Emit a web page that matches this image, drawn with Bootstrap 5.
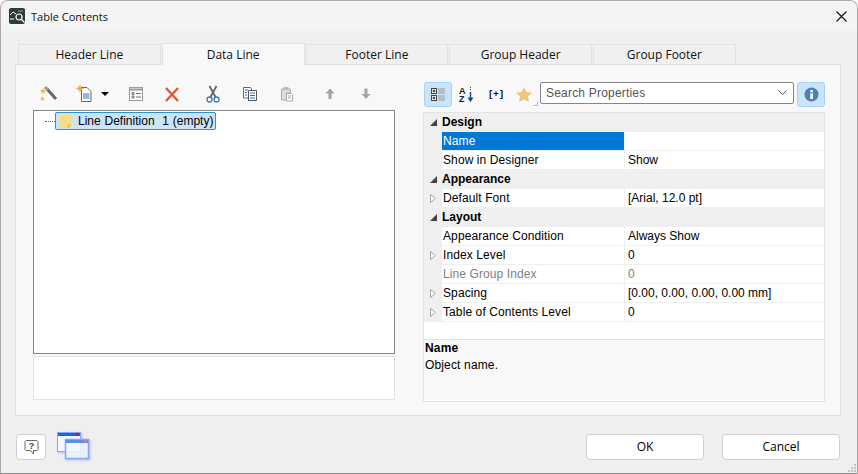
<!DOCTYPE html>
<html lang="en">
<head>
    <meta charset="UTF-8">
    <meta name="viewport" content="width=device-width, initial-scale=1.0">
    <title>Table Contents</title>
    <link href="https://cdn.jsdelivr.net/npm/bootstrap@5.3.0/dist/css/bootstrap.min.css" rel="stylesheet">
    <style>
        html, body { height: 100%; overflow: hidden; background: #fff; }
        body { font-family: "Liberation Sans", Arial, sans-serif; font-size: 12px; color: #000; line-height: 1; }
        .dlg { width: 858px; height: 474px; border: 1px solid #a9a9a9; border-bottom-color: #8c8c8c; border-radius: 8px 8px 0 0; background: #efefef; overflow: hidden; position: relative; }
        .dlg-title { height: 30px; background: #f3f3f3; padding: 0 10px 0 8px; }
        .dlg-title span { font-family: "Open Sans", sans-serif; font-size: 11px; margin-left: 6px; color: #111; }
        .dlg-body { padding: 11px 16px 0 14px; }
        .tabrow { height: 22px; padding-left: 3px; gap: 1px; align-items: flex-end; border: 0; flex-wrap: nowrap; }
        .tabrow .tabitem { width: 142.75px; height: 20px; background: #f0f0f0; border: 1px solid #e3e3e3; border-bottom: 0; text-align: center; font-family: "Open Sans", sans-serif; font-size: 12px; line-height: 19px; color: #111; }
        .tabrow .tabitem.on { height: 22px; background: #f8f8f8; line-height: 21px; position: relative; z-index: 1; margin-bottom: -1px; }
        .panel-box { height: 352px; background: #f8f8f8; border: 1px solid #e3e3e3; padding: 17px 14px 14px 17px; gap: 29px; }
        .left-side { width: 362px; flex: none; }
        .right-side { width: 402px; flex: none; }
        .tbar { height: 24px; margin-bottom: 4px; position: relative; }
        .ticon { width: 24px; height: 24px; flex: none; }
        .tree-box { height: 244px; background: #fff; border: 1px solid #858585; padding: 1px 0 0 11px; }
        .tree-dots { width: 10px; border-top: 1px dotted #666; }
        .tree-sel { height: 18px; background: #cce4f7; border: 1px solid #2f8fd6; border-radius: 2px; padding: 0 2px 1px 3px; color: #000; }
        .tree-sel span { margin-left: 7px; word-spacing: .5px; }
        .note-box { height: 44px; margin-top: 2px; background: #fff; border: 1px solid #e3e3e3; }
        .rbtn { width: 28px; height: 25px; flex: none; border-radius: 3px; }
        .rbtn.on { background: #cce4f7; border: 1px solid #a6d2f5; }
        .combo { width: 254px; height: 22px; background: #fff; border: 1px solid #858585; border-radius: 2px; padding: 0 6px 1px 5px; color: #555; letter-spacing: .2px; }
        .prop-grid { height: 290px; border: 1px solid #e3e3e3; margin-top: 5px; background: #fff; margin-left: -1px; width: 402px; }
        .prop-sec { height: 19px; background: #efefef; font-weight: 700; padding-bottom: 1px; }
        .prop-row { height: 19px; background: #efefef; }
        .gut { width: 18px; flex: none; height: 100%; }
        .pname { width: 182px; flex: none; height: 18px; background: #fff; padding: 0 0 1px 1px; letter-spacing: .1px; margin-right: 1px; }
        .pval { flex-grow: 1; height: 18px; background: #fff; padding: 0 0 1px 3px; }
        .pname.sel { background: #0078d7; color: #fff; }
        .muted-row { color: #808080; }
        .prop-blank { height: 18px; background: #fff; border-bottom: 1px solid #e3e3e3; }
        .prop-desc { height: 60px; background: #f8f8f8; padding: 0 1px; line-height: 17px; letter-spacing: .15px; }
        .dlg-foot { height: 58px; padding: 18px 17px 0 15px; }
        .helpbtn { width: 30px; height: 26px; background: #fff; border: 1px solid #cfcfcf; border-radius: 4px; padding: 0; }
        .winicon { margin: -2px 0 0 11px; filter: drop-shadow(1px 1px 1px rgba(90, 120, 220, .45)); }
        .actbtn { width: 118px; height: 26px; background: #fff; border: 1px solid #cfcfcf; border-radius: 4px; font-family: "Open Sans", sans-serif; font-size: 12px; color: #000; padding: 0; }
        .actbtn:hover { background: #f5f5f5; border-color: #bbb; color: #000; }
        .gripper { position: absolute; right: 0; bottom: 0; }
    </style>
</head>
<body>
    <div class="dlg d-flex flex-column">
        <!-- title bar -->
        <div class="dlg-title d-flex align-items-center flex-shrink-0">
            <svg width="16" height="16" viewBox="0 0 16 16"><rect width="16" height="16" rx="2" fill="#2f3a3d"/><path d="M1 7 4 4l3 2" fill="none" stroke="#fff"/><path d="M1 11h4" stroke="#fff"/><circle cx="10" cy="9" r="3" fill="none" stroke="#fff" stroke-width="1.2"/><path d="m12.500 11.500 3 3" stroke="#fff" stroke-width="1.3"/><path d="M9 3h5" stroke="#9aa"/></svg>
            <span>Table Contents</span>
            <svg class="ms-auto" width="11" height="11" viewBox="0 0 11 11"><path d="m.5.5 10 10m0-10-10 10" stroke="#111" stroke-width="1.1" fill="none"/></svg>
        </div>

        <div class="dlg-body flex-shrink-0">
            <!-- tabs -->
            <div class="nav tabrow d-flex">
                <div class="tabitem">Header Line</div>
                <div class="tabitem on">Data Line</div>
                <div class="tabitem">Footer Line</div>
                <div class="tabitem">Group Header</div>
                <div class="tabitem">Group Footer</div>
            </div>

            <div class="panel-box d-flex">
                <!-- left: line tree -->
                <div class="left-side">
                    <div class="tbar d-flex align-items-center">
                        <svg class="ticon" style="margin-left:3px" viewBox="0 0 24 24"><path d="m11 7 9 10" stroke="#666" stroke-width="3"/><path d="m9 5 3 3" stroke="#999" stroke-width="3"/><path d="m7 6 1 2 2 .3-1.500 1.400.4 2L7 10.800l-1.900.9.400-2L4 8.300 6 8z" fill="#eebb55"/><path d="m6.500 14 .8 1.700 1.800.2-1.300 1.200.3 1.900-1.600-.9-1.600.9.300-1.900-1.300-1.200 1.800-.2z" fill="#f0c060"/></svg>
                        <svg class="ticon" style="margin-left:12px" viewBox="0 0 24 24"><path d="M9.500 5.500H15l4 4v10h-9.500z" fill="#fff" stroke="#666"/><path d="M11 12h6.500M11 14h6.500M11 16h6.500" stroke="#2a6fb5"/><circle cx="8" cy="6.500" r="2" fill="#f2b84e"/><path d="M8 2.500v8M4 6.500h8M5.500 4l5 5M10.500 4l-5 5" stroke="#e6a23a" stroke-width=".7"/></svg>
                        <svg width="8" height="4" viewBox="0 0 8 4" style="margin-left:5px"><path d="M0 0h8L4 4z" fill="#000"/></svg>
                        <svg class="ticon" style="margin-left:15px" viewBox="0 0 24 24"><rect x="5.500" y="5.500" width="13" height="13" fill="#fafafa" stroke="#999"/><path d="M5 7.500h14" stroke="#999" stroke-width="2"/><path d="M8 10.500h2v2H8zm0 3.500h2v2H8z" fill="none" stroke="#777"/><path d="M12 11.500h5M12 15h5" stroke="#777"/></svg>
                        <svg class="ticon" style="margin-left:12px" viewBox="0 0 24 24"><path d="m6 6 12 13M18 6 6 19" stroke="#d9593a" stroke-width="2.400"/></svg>
                        <svg class="ticon" style="margin-left:17px" viewBox="0 0 24 24"><path d="m8.500 4 6 11M15.500 4l-6 11" stroke="#666" stroke-width="1.800"/><circle cx="8.500" cy="17.500" r="2.500" fill="none" stroke="#3f79b8" stroke-width="1.300"/><circle cx="15.500" cy="17.500" r="2.500" fill="none" stroke="#3f79b8" stroke-width="1.300"/></svg>
                        <svg class="ticon" style="margin-left:13px" viewBox="0 0 24 24"><path d="M5.500 5.500h7l1 1.500v9h-8z" fill="#fff" stroke="#666"/><path d="M10.500 8.500h8v10h-8z" fill="#fff" stroke="#555"/><path d="M7 8h3M7 10.500h2M7 13h2" stroke="#2a6fb5"/><path d="M12 11h5M12 13.500h5M12 16h5" stroke="#2a6fb5"/></svg>
                        <svg class="ticon" style="margin-left:12px" viewBox="0 0 24 24"><path d="M7.500 7h9v4h-4v7h-5z" fill="#ddd" stroke="#aaa"/><rect x="9.500" y="5" width="5" height="3" fill="#bbb"/><path d="M12.500 11.500h5l1 1v6.500h-6z" fill="#fff" stroke="#aaa"/><path d="M14 14h3M14 16h3" stroke="#aaa"/></svg>
                        <svg class="ticon" style="margin-left:20px" viewBox="0 0 24 24"><path d="M12 6.500 16.500 11.500h-3v5.500h-3v-5.500h-3z" fill="#a3a3a3"/></svg>
                        <svg class="ticon" style="margin-left:12px" viewBox="0 0 24 24"><path d="M12 17 7.500 12h3V6.500h3V12h3z" fill="#a3a3a3"/></svg>
                    </div>
                    <div class="tree-box d-flex align-items-start">
                        <div class="tree-dots" style="margin-top:9px"></div>
                        <div class="tree-sel d-flex align-items-center">
                            <svg width="12" height="14" viewBox="0 0 12 14"><path d="M0 0h10a2 2 0 0 1 2 2v12H1a1 1 0 0 1-1-1z" fill="#fbdc84"/><path d="M9.500 14v-3H12" fill="none" stroke="#d9b34f"/></svg>
                            <span>Line Definition&nbsp; 1 (empty)</span>
                        </div>
                    </div>
                    <div class="note-box"></div>
                </div>

                <!-- right: properties -->
                <div class="right-side">
                    <div class="d-flex align-items-start">
                        <div class="rbtn on d-flex align-items-center justify-content-center">
                            <svg width="15" height="15" viewBox="0 0 15 15"><rect x=".5" y="1.500" width="5" height="5" fill="#fff" stroke="#444"/><rect x=".5" y="8.500" width="5" height="5" fill="#fff" stroke="#444"/><path d="M1.500 4h3M3 2.500v3M1.500 11h3M3 9.500v3" stroke="#222"/><path d="M7 2h7M7 4h7M7 6h7M7 9h7M7 11h7M7 13h7" stroke="#999"/></svg>
                        </div>
                        <div class="rbtn d-flex align-items-center justify-content-center" style="margin-left:1px">
                            <svg width="16" height="17" viewBox="0 0 16 17"><text x="0" y="7.500" font-family="Liberation Sans" font-size="9" font-weight="700" fill="#222">A</text><text x="0" y="16" font-family="Liberation Sans" font-size="9" font-weight="700" fill="#222">Z</text><path d="M11.500 6v9" stroke="#1c3d9c" stroke-width="1.400"/><path d="M8.500 11.500h6l-3 4.500z" fill="#1c3d9c"/><path d="M11.500 1v3" stroke="#1c3d9c" stroke-dasharray="1 1"/></svg>
                        </div>
                        <div class="rbtn d-flex align-items-center justify-content-center" style="margin-left:1px;font:700 9px 'Liberation Mono',monospace">[+]</div>
                        <div class="rbtn">
                            <svg width="28" height="25" viewBox="0 0 28 25"><path d="m14 5 2.400 5 5.600.7-4.100 3.800 1.100 5.500-5-2.800-5 2.800 1.100-5.500L6 10.700l5.600-.7z" fill="#efc57e"/><path d="M23.500 23.500h4v-4" fill="none" stroke="#b5b5b5"/></svg>
                        </div>
                        <div class="combo d-flex align-items-center" style="margin-left:2px">
                            <span>Search Properties</span>
                            <svg class="ms-auto" width="9" height="5" viewBox="0 0 9 5"><path d="m.5.5 4 4 4-4" fill="none" stroke="#555"/></svg>
                        </div>
                        <div class="rbtn on d-flex align-items-center justify-content-center" style="margin-left:3px">
                            <svg width="15" height="15" viewBox="0 0 15 15"><circle cx="7.500" cy="7.500" r="7" fill="#4f80b5"/><rect x="6.300" y="6.300" width="2.600" height="5.700" fill="#fff"/><rect x="6.300" y="3" width="2.600" height="2.300" fill="#fff"/></svg>
                        </div>
                    </div>

                    <div class="prop-grid">
                        <div class="prop-sec d-flex align-items-center">
                            <div class="gut d-flex align-items-center justify-content-center"><svg width="7" height="7" viewBox="0 0 7 7"><path d="M7 0v7H0z" fill="#444"/></svg></div><span>Design</span>
                        </div>
                        <div class="prop-row d-flex"><div class="gut"></div><div class="pname sel d-flex align-items-center">Name</div><div class="pval d-flex align-items-center"></div></div>
                        <div class="prop-row d-flex"><div class="gut"></div><div class="pname d-flex align-items-center">Show in Designer</div><div class="pval d-flex align-items-center">Show</div></div>
                        <div class="prop-sec d-flex align-items-center">
                            <div class="gut d-flex align-items-center justify-content-center"><svg width="7" height="7" viewBox="0 0 7 7"><path d="M7 0v7H0z" fill="#444"/></svg></div><span>Appearance</span>
                        </div>
                        <div class="prop-row d-flex"><div class="gut d-flex align-items-center justify-content-center"><svg width="6" height="9" viewBox="0 0 6 9"><path d="m.5.5 5 4-5 4z" fill="#fff" stroke="#a6a6a6"/></svg></div><div class="pname d-flex align-items-center">Default Font</div><div class="pval d-flex align-items-center">[Arial, 12.0 pt]</div></div>
                        <div class="prop-sec d-flex align-items-center">
                            <div class="gut d-flex align-items-center justify-content-center"><svg width="7" height="7" viewBox="0 0 7 7"><path d="M7 0v7H0z" fill="#444"/></svg></div><span>Layout</span>
                        </div>
                        <div class="prop-row d-flex"><div class="gut"></div><div class="pname d-flex align-items-center">Appearance Condition</div><div class="pval d-flex align-items-center">Always Show</div></div>
                        <div class="prop-row d-flex"><div class="gut d-flex align-items-center justify-content-center"><svg width="6" height="9" viewBox="0 0 6 9"><path d="m.5.5 5 4-5 4z" fill="#fff" stroke="#a6a6a6"/></svg></div><div class="pname d-flex align-items-center">Index Level</div><div class="pval d-flex align-items-center">0</div></div>
                        <div class="prop-row muted-row d-flex"><div class="gut"></div><div class="pname d-flex align-items-center">Line Group Index</div><div class="pval d-flex align-items-center">0</div></div>
                        <div class="prop-row d-flex"><div class="gut d-flex align-items-center justify-content-center"><svg width="6" height="9" viewBox="0 0 6 9"><path d="m.5.5 5 4-5 4z" fill="#fff" stroke="#a6a6a6"/></svg></div><div class="pname d-flex align-items-center">Spacing</div><div class="pval d-flex align-items-center">[0.00, 0.00, 0.00, 0.00 mm]</div></div>
                        <div class="prop-row d-flex"><div class="gut d-flex align-items-center justify-content-center"><svg width="6" height="9" viewBox="0 0 6 9"><path d="m.5.5 5 4-5 4z" fill="#fff" stroke="#a6a6a6"/></svg></div><div class="pname d-flex align-items-center">Table of Contents Level</div><div class="pval d-flex align-items-center">0</div></div>
                        <div class="prop-blank"></div>
                        <div class="prop-desc"><b>Name</b><br>Object name.</div>
                    </div>
                </div>
            </div>
        </div>

        <!-- buttons -->
        <div class="dlg-foot d-flex align-items-start flex-shrink-0">
            <button type="button" class="btn helpbtn d-flex align-items-center justify-content-center">
                <svg width="15" height="17" viewBox="0 0 15 17"><path d="M2 1.500h11l1 1v8l-1 1H9.500V15l-3-3.500H2l-1-1v-8z" fill="#fff" stroke="#666"/><text x="7.500" y="9.500" text-anchor="middle" font-family="Liberation Sans" font-size="9" font-weight="700" fill="#444">?</text></svg>
            </button>
            <svg class="winicon" width="33" height="28" viewBox="0 0 33 28"><rect x=".5" y=".5" width="23" height="19" fill="#f2f5ff" stroke="#8aa6ef"/><rect x="1" y="1" width="22" height="3" fill="#1b61ea"/><rect x="19" y="1" width="2.500" height="2.500" fill="#c8103a"/><rect x="8.500" y="7.500" width="23" height="19" fill="#f5f7ff" fill-opacity=".85" stroke="#8aa6ef" stroke-width="1.500"/><rect x="9" y="8" width="22" height="3" fill="#5d8cf2"/><rect x="27" y="8" width="2.500" height="2.500" fill="#e77"/></svg>
            <button type="button" class="btn actbtn ms-auto">OK</button>
            <button type="button" class="btn actbtn" style="margin-left:18px">Cancel</button>
        </div>
        <svg class="gripper" width="10" height="10" viewBox="0 0 10 10"><path d="M7 1h2v2H7zM4 4h2v2H4zM7 4h2v2H7zM1 7h2v2H1zM4 7h2v2H4zM7 7h2v2H7z" fill="#c4c4c4"/></svg>
    </div>
    <script src="https://cdn.jsdelivr.net/npm/bootstrap@5.3.0/dist/js/bootstrap.bundle.min.js"></script>
</body>
</html>
